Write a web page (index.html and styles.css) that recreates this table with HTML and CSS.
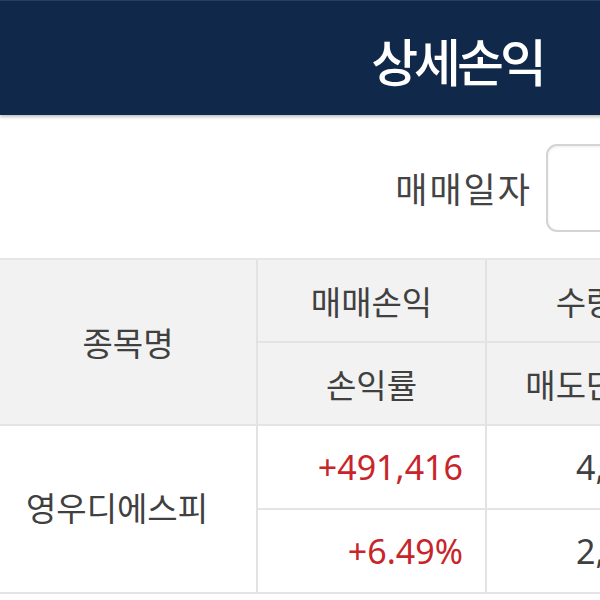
FILE: index.html
```html
<!DOCTYPE html>
<html lang="ko">
<head>
<meta charset="utf-8">
<title>상세손익</title>
<link rel="stylesheet" href="styles.css">
</head>
<body>
<div class="page">
  <header class="topbar">
    <h1 class="title">상세손익</h1>
  </header>
  <div class="filter">
    <span class="filter-label">매매일자</span>
    <div class="date-input"></div>
  </div>
  <div class="grid">
    <div class="cell head span2 c1">종목명</div>
    <div class="cell head c2">매매손익</div>
    <div class="cell head c3">수량</div>
    <div class="cell head c4">매수단가</div>
    <div class="cell head c2 sub">손익률</div>
    <div class="cell head c3 sub">매도단가</div>
    <div class="cell head c4 sub">매수금액</div>

    <div class="cell body span2 c1 name">영우디에스피</div>
    <div class="cell body c2 num red">+491,416</div>
    <div class="cell body c3 num">4,950</div>
    <div class="cell body c4 num">1,530</div>
    <div class="cell body c2 num red sub bottom">+6.49%</div>
    <div class="cell body c3 num sub bottom">2,875</div>
    <div class="cell body c4 num sub bottom">7,573,500</div>
  </div>
</div>
</body>
</html>
```

FILE: styles.css
```css
html, body {
  margin: 0;
  padding: 0;
  overflow: hidden;
  background: #ffffff;
}

.page {
  width: 914px;
  font-family: "Noto Sans CJK KR", "Noto Sans", sans-serif;
  color: #444444;
}

.topbar {
  height: 115px;
  background: #10284a;
  border-top: 1px solid #2a3f5e;
  box-sizing: border-box;
  display: flex;
  align-items: center;
  justify-content: center;
  box-shadow: 0 2px 3px rgba(0, 0, 0, 0.25);
  position: relative;
  z-index: 1;
}

.title {
  margin: 0;
  color: #ffffff;
  font-size: 51px;
  font-weight: 500;
  letter-spacing: -4px;
  padding-top: 4px;
}

.filter {
  height: 143px;
  box-sizing: border-box;
  display: flex;
  justify-content: flex-end;
  align-items: center;
  gap: 14px;
  padding: 2px 28px 0 0;
}

.filter-label {
  font-size: 35px;
  color: #444444;
  letter-spacing: 2px;
}

.date-input {
  width: 340px;
  height: 88px;
  box-sizing: border-box;
  border: 2px solid #d4d4d4;
  border-radius: 11px;
  box-shadow: inset 0 1px 3px rgba(0, 0, 0, 0.08);
  background: #fff;
}

.grid {
  display: grid;
  grid-template-columns: 258px 229px 200px 227px;
  grid-template-rows: 83px 83px 84px 84px;
  border-top: 2px solid #e6e6e6;
}

.cell {
  box-sizing: border-box;
  display: flex;
  align-items: center;
  font-size: 33px;
  border-right: 2px solid #e2e2e2;
  border-bottom: 2px solid #e4e4e4;
  white-space: nowrap;
  overflow: hidden;
}

.head {
  background: #f2f2f2;
  justify-content: center;
  color: #404040;
}

.span2 {
  grid-row: span 2;
}

.body {
  background: #ffffff;
}

.name {
  justify-content: center;
  color: #404040;
  padding: 0 22px 4px 0;
}

.num {
  justify-content: flex-end;
  padding-right: 22px;
  font-family: "Noto Sans", "Noto Sans CJK KR", sans-serif;
  font-size: 34px;
  color: #404040;
}

.red {
  color: #c8252b;
}

.c1 { grid-column: 1; }
.c2 { grid-column: 2; }
.c3 { grid-column: 3; }
.c4 { grid-column: 4; }
```
